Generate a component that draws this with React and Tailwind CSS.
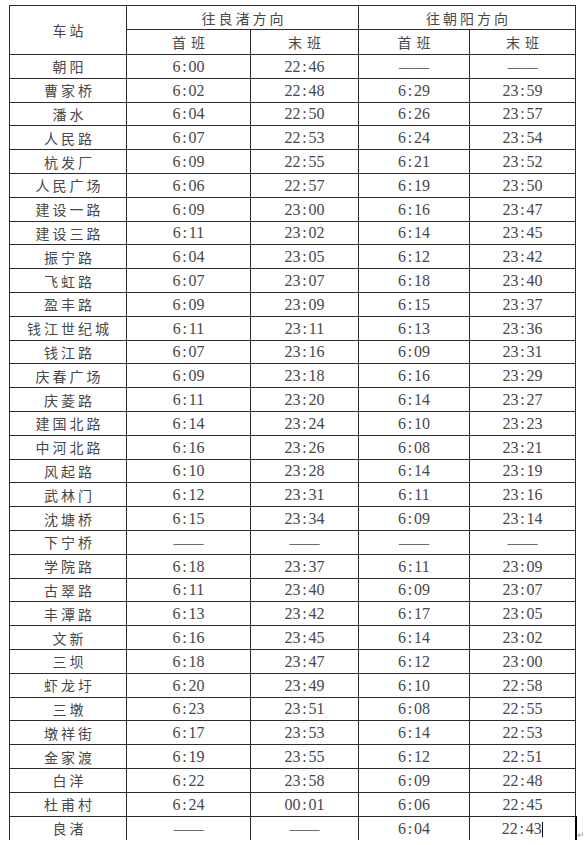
import React from 'react';

const rows = [
    ['朝阳', '6:00', '22:46', null, null],
    ['曹家桥', '6:02', '22:48', '6:29', '23:59'],
    ['潘水', '6:04', '22:50', '6:26', '23:57'],
    ['人民路', '6:07', '22:53', '6:24', '23:54'],
    ['杭发厂', '6:09', '22:55', '6:21', '23:52'],
    ['人民广场', '6:06', '22:57', '6:19', '23:50'],
    ['建设一路', '6:09', '23:00', '6:16', '23:47'],
    ['建设三路', '6:11', '23:02', '6:14', '23:45'],
    ['振宁路', '6:04', '23:05', '6:12', '23:42'],
    ['飞虹路', '6:07', '23:07', '6:18', '23:40'],
    ['盈丰路', '6:09', '23:09', '6:15', '23:37'],
    ['钱江世纪城', '6:11', '23:11', '6:13', '23:36'],
    ['钱江路', '6:07', '23:16', '6:09', '23:31'],
    ['庆春广场', '6:09', '23:18', '6:16', '23:29'],
    ['庆菱路', '6:11', '23:20', '6:14', '23:27'],
    ['建国北路', '6:14', '23:24', '6:10', '23:23'],
    ['中河北路', '6:16', '23:26', '6:08', '23:21'],
    ['风起路', '6:10', '23:28', '6:14', '23:19'],
    ['武林门', '6:12', '23:31', '6:11', '23:16'],
    ['沈塘桥', '6:15', '23:34', '6:09', '23:14'],
    ['下宁桥', null, null, null, null],
    ['学院路', '6:18', '23:37', '6:11', '23:09'],
    ['古翠路', '6:11', '23:40', '6:09', '23:07'],
    ['丰潭路', '6:13', '23:42', '6:17', '23:05'],
    ['文新', '6:16', '23:45', '6:14', '23:02'],
    ['三坝', '6:18', '23:47', '6:12', '23:00'],
    ['虾龙圩', '6:20', '23:49', '6:10', '22:58'],
    ['三墩', '6:23', '23:51', '6:08', '22:55'],
    ['墩祥街', '6:17', '23:53', '6:14', '22:53'],
    ['金家渡', '6:19', '23:55', '6:12', '22:51'],
    ['白洋', '6:22', '23:58', '6:09', '22:48'],
    ['杜甫村', '6:24', '00:01', '6:06', '22:45'],
    ['良渚', null, null, '6:04', '22:43'],
];

const cjk = "font-['Noto_Sans_CJK_SC','Noto_Sans',sans-serif]";
const serif = "font-['Liberation_Serif',serif]";

// times are set like SimSun: half-width digits and a colon padded out to the same width
const Time = ({ value }) => {
    if (!value) {
        return <span className={`${serif} text-[15px] font-bold text-[#6a6a6a]`}>——</span>;
    }
    const [h, m] = value.split(':');
    return (
        <span className={`${serif} text-[16px]`}>
            {h}
            <span className="inline-block w-[8px] text-center">:</span>
            {m}
        </span>
    );
};

const Label = ({ children, className = '' }) => (
    <span className={`${cjk} text-[14px] tracking-[3px] pl-[3px] ${className}`}>{children}</span>
);

export default function App() {
    const cell = 'border border-[#2b2b2b] text-center align-middle p-0 leading-none';

    return (
        <div className="min-h-screen bg-white pl-[9px] pt-[5px] text-[#474747]">
            <div className="relative w-[566px]">
                <table className="w-[566px] table-fixed border-collapse">
                    <colgroup>
                        <col className="w-[117px]" />
                        <col className="w-[124px]" />
                        <col className="w-[108px]" />
                        <col className="w-[111px]" />
                        <col className="w-[106px]" />
                    </colgroup>
                    <thead>
                        <tr className="h-[24px]">
                            <th rowSpan={2} className={`${cell} font-normal`}>
                                <Label>车站</Label>
                            </th>
                            <th colSpan={2} className={`${cell} font-normal`}>
                                <Label>往良渚方向</Label>
                            </th>
                            <th colSpan={2} className={`${cell} font-normal`}>
                                <Label>往朝阳方向</Label>
                            </th>
                        </tr>
                        <tr className="h-[25px]">
                            <th className={`${cell} font-normal`}><Label className="tracking-[5px] pl-[5px]">首班</Label></th>
                            <th className={`${cell} font-normal`}><Label className="tracking-[5px] pl-[5px]">末班</Label></th>
                            <th className={`${cell} font-normal`}><Label className="tracking-[5px] pl-[5px]">首班</Label></th>
                            <th className={`${cell} font-normal`}><Label className="tracking-[5px] pl-[5px]">末班</Label></th>
                        </tr>
                    </thead>
                    <tbody>
                        {rows.map((r, i) => {
                            const last = i === rows.length - 1;
                            const edge = last ? 'border-b-0' : '';
                            return (
                                <tr key={r[0]} className="h-[23.8px]">
                                    <td className={`${cell} ${edge}`}>
                                        <Label>{r[0]}</Label>
                                    </td>
                                    <td className={`${cell} ${edge}`}><Time value={r[1]} /></td>
                                    <td className={`${cell} ${edge}`}><Time value={r[2]} /></td>
                                    <td className={`${cell} ${edge}`}><Time value={r[3]} /></td>
                                    <td className={`${cell} ${edge} ${last ? 'border-r-2 border-r-black' : ''}`}>
                                        <Time value={r[4]} />
                                        {last && <span className="inline-block w-px h-[15px] bg-black align-middle" />}
                                    </td>
                                </tr>
                            );
                        })}
                    </tbody>
                </table>
                <span className={`absolute right-[-10px] bottom-[-2px] ${cjk} text-[9px] text-[#999]`}>↵</span>
            </div>
        </div>
    );
}
